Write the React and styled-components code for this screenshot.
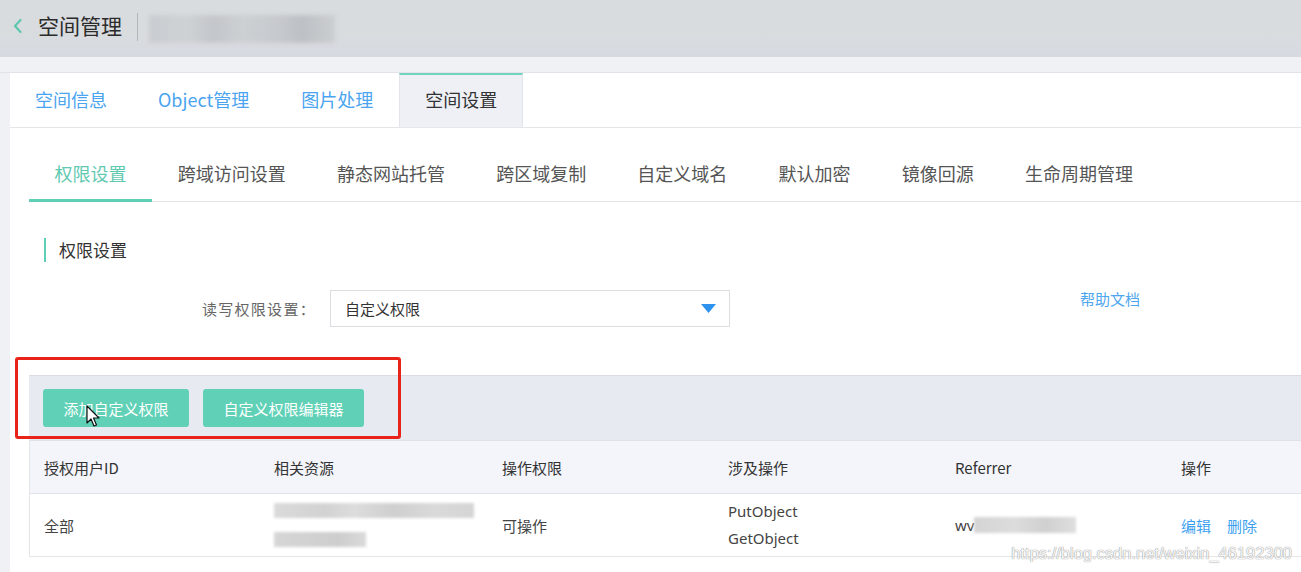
import React from "react";
import styled, { createGlobalStyle } from "styled-components";

const GlobalStyle = createGlobalStyle`
  html, body { margin: 0; padding: 0; }
  body {
    background: #f0f1f5;
    font-family: "Noto Sans CJK SC", "Noto Sans", sans-serif;
    color: #333;
    overflow: hidden;
  }
  * { box-sizing: border-box; }
`;

const Page = styled.div`
  position: relative;
  width: 1301px;
  height: 572px;
  display: flex;
  flex-direction: column;
  overflow: hidden;
`;

const Header = styled.header`
  height: 57px;
  flex: none;
  background: linear-gradient(#d9dcdf, #d9dcdf 60%, #d6d9e0);
  display: flex;
  align-items: center;
  padding-left: 12px;
`;

const BackIcon = styled.svg`
  width: 12px;
  height: 16px;
  margin-right: 14px;
  margin-bottom: 5px;
`;

const HeaderTitle = styled.h1`
  margin: 0 0 6px 0;
  font-size: 21px;
  font-weight: 400;
  color: #2b2b2b;
  line-height: 1;
`;

const HeaderDivider = styled.span`
  width: 1px;
  height: 28px;
  background: #b3b6ba;
  margin: 0 11px 3px 15px;
`;

const Blurred = styled.div`
  width: ${(p) => p.$w}px;
  height: ${(p) => p.$h}px;
  background: ${(p) => p.$bg};
  filter: blur(${(p) => p.$blur || 1.5}px);
`;

const Gutter = styled.div`
  height: 16px;
  flex: none;
  border-bottom: 1px solid #e2e3e8;
`;

const Panel = styled.main`
  flex: 1;
  margin-left: 10px;
  background: #fff;
  display: flex;
  flex-direction: column;
`;

const TopTabs = styled.nav`
  display: flex;
  height: 55px;
  border-bottom: 1px solid #e5e6ea;
  flex: none;
`;

const TopTab = styled.div`
  padding: 0 ${(p) => (p.$first ? 24 : 25)}px;
  height: 54px;
  line-height: 49px;
  font-size: 18px;
  color: ${(p) => (p.$active ? "#333" : "#4ba4ef")};
  background: ${(p) => (p.$active ? "#eef0f6" : "transparent")};
  border-top: 2px solid ${(p) => (p.$active ? "#6fd3bd" : "transparent")};
  border-left: 1px solid ${(p) => (p.$active ? "#e3e5ea" : "transparent")};
  border-right: 1px solid ${(p) => (p.$active ? "#e3e5ea" : "transparent")};
  white-space: nowrap;
`;

const Content = styled.div`
  padding-left: 19px;
  display: flex;
  flex-direction: column;
`;

const SubTabs = styled.nav`
  margin-top: 20px;
  display: flex;
  border-bottom: 1px solid #e3e3e3;
`;

const SubTab = styled.div`
  padding: 0 25.6px;
  height: 54px;
  line-height: 51px;
  font-size: 18px;
  margin-bottom: -1px;
  color: ${(p) => (p.$active ? "#5fc9b1" : "#555")};
  border-bottom: 3px solid ${(p) => (p.$active ? "#5fcfb5" : "transparent")};
  white-space: nowrap;
`;

const SectionTitle = styled.h2`
  margin: 36px 0 0 15px;
  height: 24px;
  line-height: 24px;
  font-size: 17px;
  font-weight: 400;
  color: #333;
  padding-left: 13px;
  border-left: 2px solid #5fcfb5;
`;

const FormRow = styled.div`
  margin-top: 28px;
  display: flex;
  align-items: flex-start;
  width: 1111px;
`;

const FieldLabel = styled.label`
  width: 287px;
  height: 37px;
  line-height: 37px;
  text-align: right;
  font-size: 15px;
  letter-spacing: 1.3px;
  color: #666;
  margin-right: 14px;
`;

const Select = styled.div`
  width: 400px;
  height: 37px;
  border: 1px solid #dcdde0;
  display: flex;
  align-items: center;
  justify-content: space-between;
  padding: 0 13px 0 14px;
  font-size: 15px;
  color: #333;
`;

const Caret = styled.svg`
  width: 15px;
  height: 9px;
`;

const HelpLink = styled.a`
  margin-left: auto;
  font-size: 15px;
  color: #4ea6ef;
  text-decoration: none;
  line-height: 18px;
`;

const Toolbar = styled.div`
  margin-top: 48px;
  background: #e8eaf2;
  border-top: 1px solid #dcdde4;
  padding: 13px 14px;
  display: flex;
  gap: 14px;
`;

const ActionButton = styled.button`
  height: 38px;
  padding: 0 20.5px;
  border: none;
  border-radius: 3px;
  background: #60d1b6;
  color: #fff;
  font-family: inherit;
  font-size: 15px;
  cursor: pointer;
`;

const Table = styled.div`
  border-left: 1px solid #e4e5e9;
  border-top: 1px solid #dfe1e7;
`;

const Row = styled.div`
  display: grid;
  grid-template-columns: 230px 228px 226px 227px 226px 1fr;
  height: ${(p) => (p.$head ? 53 : 63)}px;
  background: ${(p) => (p.$head ? "#f4f5fa" : "#fff")};
  border-bottom: 1px solid ${(p) => (p.$head ? "#e0e2e8" : "#e6e6e6")};
  align-items: center;
`;

const Cell = styled.div`
  padding-left: 14px;
  font-size: 15px;
  color: ${(p) => (p.$head ? "#333" : "#444")};
  line-height: 27px;
  display: flex;
  flex-direction: ${(p) => (p.$stack ? "column" : "row")};
  align-items: ${(p) => (p.$stack ? "flex-start" : "center")};
  gap: ${(p) => p.$gap || 0}px;
`;

const LatinText = styled.span`
  font-family: "Noto Sans", "Open Sans", sans-serif;
  font-size: 15px;
  color: #444;
`;

const LinkText = styled.a`
  color: #3d9ff0;
  font-size: 15px;
  text-decoration: none;
`;

const Annotation = styled.div`
  position: absolute;
  left: 15px;
  top: 357px;
  width: 386px;
  height: 82px;
  border: 3px solid #e8231a;
  border-radius: 3px;
  pointer-events: none;
`;

const Cursor = styled.svg`
  position: absolute;
  left: 86px;
  top: 405px;
  width: 14px;
  height: 23px;
`;

const Watermark = styled.div`
  position: absolute;
  right: 9px;
  bottom: 9px;
  font-family: "Liberation Sans", Arial, sans-serif;
  font-size: 16.5px;
  color: rgba(255, 255, 255, 0.92);
  text-shadow: 0 0 1px #9a9a9a, 0 0 1px #9a9a9a;
`;

const topTabs = ["空间信息", "Object管理", "图片处理", "空间设置"];
const subTabs = [
  "权限设置",
  "跨域访问设置",
  "静态网站托管",
  "跨区域复制",
  "自定义域名",
  "默认加密",
  "镜像回源",
  "生命周期管理",
];
const headers = ["授权用户ID", "相关资源", "操作权限", "涉及操作", "Referrer", "操作"];

export default function App() {
  return (
    <Page>
      <GlobalStyle />
      <Header>
        <BackIcon viewBox="0 0 12 16">
          <path d="M8.5 2 L3 8 L8.5 14" fill="none" stroke="#5cc6ae" strokeWidth="2.2" strokeLinecap="round" strokeLinejoin="round" />
        </BackIcon>
        <HeaderTitle>空间管理</HeaderTitle>
        <HeaderDivider />
        <Blurred
          $w={186}
          $h={28}
          $blur={2}
          $bg="linear-gradient(90deg, #c9ccd0 0%, #cfd2d5 20%, #c3c6ca 35%, #cdd0d3 50%, #c6c9cd 70%, #bdc0c4 82%, #cbced1 100%)"
        />
      </Header>
      <Gutter />
      <Panel>
        <TopTabs>
          {topTabs.map((t, i) => (
            <TopTab key={t} $active={i === 3} $first={i === 0}>
              {t}
            </TopTab>
          ))}
        </TopTabs>
        <Content>
          <SubTabs>
            {subTabs.map((t, i) => (
              <SubTab key={t} $active={i === 0}>
                {t}
              </SubTab>
            ))}
          </SubTabs>
          <SectionTitle>权限设置</SectionTitle>
          <FormRow>
            <FieldLabel>读写权限设置：</FieldLabel>
            <Select>
              <span>自定义权限</span>
              <Caret viewBox="0 0 15 9">
                <path d="M0 0 H15 L7.5 9 Z" fill="#2e92ef" />
              </Caret>
            </Select>
            <HelpLink>帮助文档</HelpLink>
          </FormRow>
          <Toolbar>
            <ActionButton>添加自定义权限</ActionButton>
            <ActionButton>自定义权限编辑器</ActionButton>
          </Toolbar>
          <Table>
            <Row $head>
              {headers.map((h) => (
                <Cell key={h} $head>
                  {h}
                </Cell>
              ))}
            </Row>
            <Row>
              <Cell>全部</Cell>
              <Cell $stack $gap={14}>
                <Blurred $w={200} $h={15} $bg="linear-gradient(90deg, #dadada 0%, #d2d2d2 25%, #dcdcdc 40%, #cfcfcf 60%, #d9d9d9 80%, #d4d4d4 100%)" />
                <Blurred $w={92} $h={15} $bg="linear-gradient(90deg, #d6d6d6, #cdcdcd 70%, #dadada)" />
              </Cell>
              <Cell>可操作</Cell>
              <Cell $stack>
                <LatinText>PutObject</LatinText>
                <LatinText>GetObject</LatinText>
              </Cell>
              <Cell>
                <LatinText>wv</LatinText>
                <Blurred $w={102} $h={16} $bg="linear-gradient(90deg, #d4d4d4, #dcdcdc 40%, #d0d0d0 70%, #dedede)" />
              </Cell>
              <Cell $gap={16}>
                <LinkText>编辑</LinkText>
                <LinkText>删除</LinkText>
              </Cell>
            </Row>
          </Table>
        </Content>
      </Panel>
      <Annotation />
      <Cursor viewBox="0 0 14 23">
        <path d="M1 1 L1 18 L5 14 L8 21 L10.5 20 L7.5 13 L13 13 Z" fill="#fff" stroke="#111" strokeWidth="1.2" strokeLinejoin="round" />
      </Cursor>
      <Watermark>https://blog.csdn.net/weixin_46192300</Watermark>
    </Page>
  );
}
